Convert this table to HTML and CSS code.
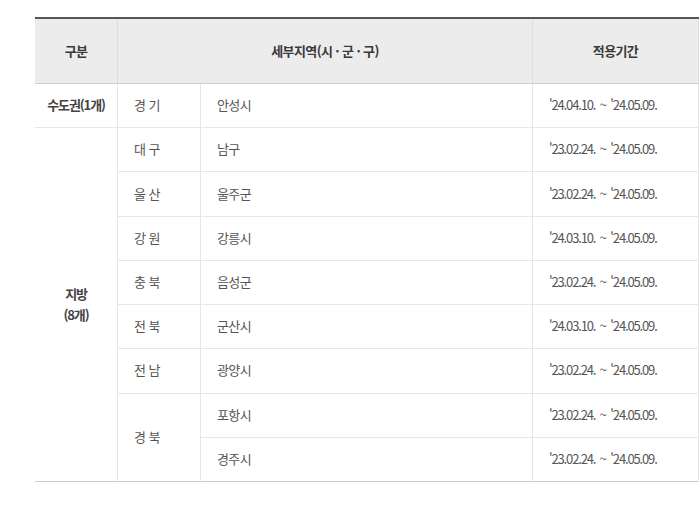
FILE: index.html
```html
<!DOCTYPE html>
<html lang="ko">
<head>
<meta charset="utf-8">
<link rel="stylesheet" href="styles.css">
</head>
<body>
<div class="wrap">
<table class="tbl">
  <colgroup>
    <col class="c1"><col class="c2"><col class="c3"><col class="c4">
  </colgroup>
  <thead>
    <tr>
      <th>구분</th>
      <th colspan="2">세부지역(시 · 군 · 구)</th>
      <th>적용기간</th>
    </tr>
  </thead>
  <tbody>
    <tr>
      <td class="grp">수도권(1개)</td>
      <td class="l">경 기</td>
      <td class="l">안성시</td>
      <td class="l date">'24.04.10. ~ '24.05.09.</td>
    </tr>
    <tr>
      <td class="grp last" rowspan="8">지방<br>(8개)</td>
      <td class="l">대 구</td>
      <td class="l">남구</td>
      <td class="l date">'23.02.24. ~ '24.05.09.</td>
    </tr>
    <tr>
      <td class="l">울 산</td>
      <td class="l">울주군</td>
      <td class="l date">'23.02.24. ~ '24.05.09.</td>
    </tr>
    <tr>
      <td class="l">강 원</td>
      <td class="l">강릉시</td>
      <td class="l date">'24.03.10. ~ '24.05.09.</td>
    </tr>
    <tr>
      <td class="l">충 북</td>
      <td class="l">음성군</td>
      <td class="l date">'23.02.24. ~ '24.05.09.</td>
    </tr>
    <tr>
      <td class="l">전 북</td>
      <td class="l">군산시</td>
      <td class="l date">'24.03.10. ~ '24.05.09.</td>
    </tr>
    <tr>
      <td class="l">전 남</td>
      <td class="l">광양시</td>
      <td class="l date">'23.02.24. ~ '24.05.09.</td>
    </tr>
    <tr>
      <td class="l last" rowspan="2">경 북</td>
      <td class="l">포항시</td>
      <td class="l date">'23.02.24. ~ '24.05.09.</td>
    </tr>
    <tr>
      <td class="l last">경주시</td>
      <td class="l date last">'23.02.24. ~ '24.05.09.</td>
    </tr>
  </tbody>
</table>
</div>
</body>
</html>
```

FILE: styles.css
```css
html, body {
  margin: 0;
  padding: 0;
  background: #ffffff;
}

.wrap {
  padding: 17px 0 0 35px;
}

.tbl {
  width: 664px;
  table-layout: fixed;
  border-collapse: separate;
  border-spacing: 0;
  border-top: 2px solid #5b5552;
  font-family: "Noto Sans CJK KR", "Noto Sans", sans-serif;
  font-size: 13px;
  letter-spacing: -0.6px;
  color: #555555;
}

.c1 { width: 83px; }
.c2 { width: 83px; }
.c3 { width: 332px; }
.c4 { width: 166px; }

.tbl th {
  background: #ececec;
  color: #3a3a3a;
  font-weight: 700;
  line-height: 21px;
  padding: 20.5px 0 22.5px;
  text-align: center;
  border-right: 1px solid #dedede;
  border-bottom: 1px solid #cfcfcf;
}

.tbl td {
  line-height: 21px;
  padding: 10.11px 0 12.11px;
  text-align: center;
  vertical-align: middle;
  border-right: 1px solid #e6e6e6;
  border-bottom: 1px solid #e6e6e6;
  white-space: nowrap;
}

.tbl td.l {
  text-align: left;
  padding-left: 16px;
}

.tbl td.date {
  letter-spacing: -1.15px;
  word-spacing: 2px;
}

.tbl td.grp {
  color: #444444;
  font-weight: 700;
  letter-spacing: -1.1px;
}

.tbl td.last {
  border-bottom-color: #cccccc;
}
```
